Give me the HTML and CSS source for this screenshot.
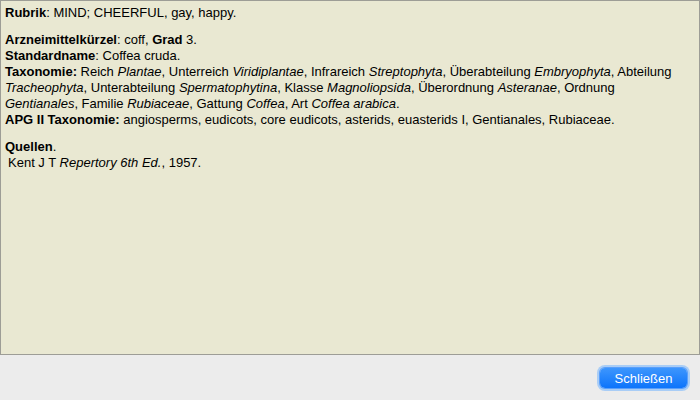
FILE: index.html
```html
<!DOCTYPE html>
<html lang="de">
<head>
  <meta charset="UTF-8" />
  <title>Rubrik-Info</title>
  <link rel="stylesheet" href="styles.css">
</head>
<body>
  <div class="info-panel">
    <p><b>Rubrik</b>: MIND; CHEERFUL, gay, happy.</p>

    <p>
      <b>Arzneimittelkürzel</b>: coff, <b>Grad</b> 3.<br>
      <b>Standardname</b>: Coffea cruda.<br>
      <b>Taxonomie:</b> Reich <i>Plantae</i>, Unterreich <i>Viridiplantae</i>, Infrareich <i>Streptophyta</i>, Überabteilung <i>Embryophyta</i>, Abteilung <i>Tracheophyta</i>, Unterabteilung <i>Spermatophytina</i>, Klasse <i>Magnoliopsida</i>, Überordnung <i>Asteranae</i>, Ordnung <i>Gentianales</i>, Familie <i>Rubiaceae</i>, Gattung <i>Coffea</i>, Art <i>Coffea arabica</i>.<br>
      <b>APG II Taxonomie:</b> angiosperms, eudicots, core eudicots, asterids, euasterids I, Gentianales, Rubiaceae.
    </p>

    <p class="sources-title"><b>Quellen</b>.</p>
    <div class="source">Kent J T <i>Repertory 6th Ed.</i>, 1957.</div>
  </div>

  <div class="button-bar">
    <button type="button" class="close-btn">Schließen</button>
  </div>
</body>
</html>
```

FILE: styles.css
```css
html, body {
  margin: 0;
  padding: 0;
  height: 400px;
  overflow: hidden;
}

body {
  font-family: 'Liberation Sans', Arial, sans-serif;
  font-size: 13px;
  color: #000;
  background-color: #ececec;
  display: flex;
  flex-direction: column;
}

.info-panel {
  height: 355px;
  box-sizing: border-box;
  background-color: #e9e8d2;
  border: 1px solid #9d9d96;
  padding: 4px 18px 4px 4px;
  line-height: 16px;
}

.info-panel p {
  margin: 0 0 11px 0;
}

.info-panel p.sources-title {
  margin-bottom: 0;
}

.source {
  padding-left: 3px;
}

.button-bar {
  flex: 1;
  display: flex;
  justify-content: flex-end;
  align-items: center;
  padding-right: 13px;
}

.close-btn {
  font-family: 'Liberation Sans', Arial, sans-serif;
  font-size: 13px;
  color: white;
  background: linear-gradient(#3d96fd, #0d74fb);
  border: none;
  border-radius: 5px;
  width: 87px;
  height: 20px;
  padding: 0;
  box-shadow: 0 0 0 1px #5a9ffb, 0 0 0 3px #a9cdf6;
  margin-top: 1px;
}
```
